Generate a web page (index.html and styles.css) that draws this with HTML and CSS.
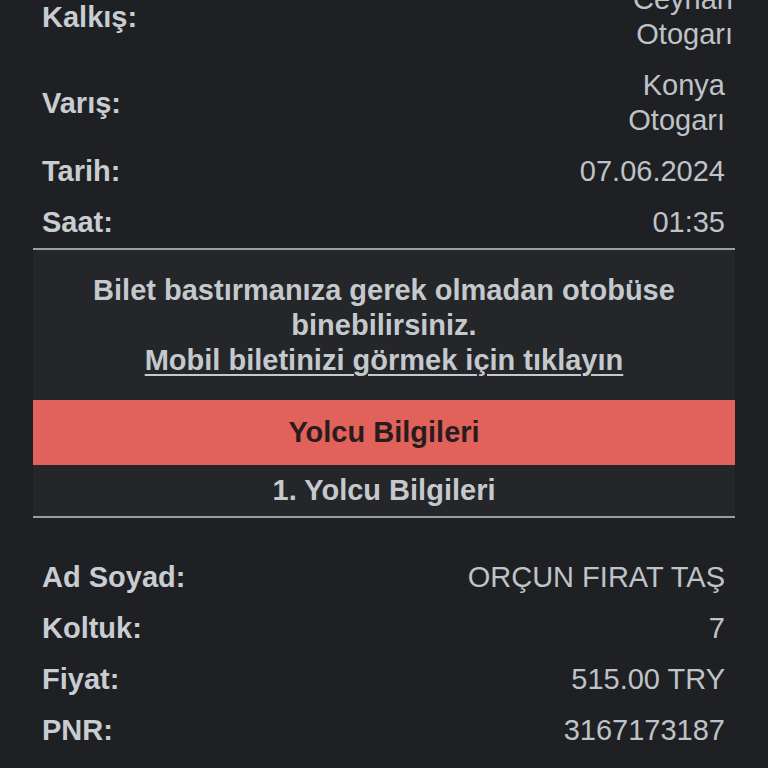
FILE: index.html
```html
<!DOCTYPE html>
<html lang="tr">
<head>
    <meta charset="UTF-8">
    <meta name="viewport" content="width=device-width, initial-scale=1.0">
    <title>Bilet Detayı</title>
    <link rel="stylesheet" href="styles.css">
</head>
<body>
    <div class="ticket">
        <div class="rows">
            <div class="row">
                <span class="label">Kalkış:</span>
                <span class="value shift">Ceyhan<br>Otogarı</span>
            </div>
            <div class="row">
                <span class="label">Varış:</span>
                <span class="value">Konya<br>Otogarı</span>
            </div>
            <div class="row">
                <span class="label">Tarih:</span>
                <span class="value">07.06.2024</span>
            </div>
            <div class="row">
                <span class="label">Saat:</span>
                <span class="value">01:35</span>
            </div>
        </div>

        <div class="box">
            <p class="notice">
                Bilet bastırmanıza gerek olmadan otobüse<br>binebilirsiniz.<br>
                <a href="#">Mobil biletinizi görmek için tıklayın</a>
            </p>
            <div class="band">Yolcu Bilgileri</div>
            <div class="sub">1. Yolcu Bilgileri</div>
        </div>

        <div class="rows passenger">
            <div class="row">
                <span class="label">Ad Soyad:</span>
                <span class="value">ORÇUN FIRAT TAŞ</span>
            </div>
            <div class="row">
                <span class="label">Koltuk:</span>
                <span class="value">7</span>
            </div>
            <div class="row">
                <span class="label">Fiyat:</span>
                <span class="value">515.00 TRY</span>
            </div>
            <div class="row">
                <span class="label">PNR:</span>
                <span class="value">3167173187</span>
            </div>
        </div>
    </div>
</body>
</html>
```

FILE: styles.css
```css
body {
    margin: 0;
    background: #1f2023;
    font-family: "Liberation Sans", Arial, sans-serif;
    font-size: 29px;
    color: #c4c9ce;
    overflow: hidden;
}

.ticket {
    margin: -26px 33px 0 33px;
}

.row {
    display: flex;
    justify-content: space-between;
    align-items: center;
    padding: 8px 10px 8px 9px;
    line-height: 35px;
}

.label {
    font-weight: bold;
    color: #c8cdd2;
}

.value {
    text-align: right;
    color: #bec3c8;
}

.shift {
    margin-right: -8px;
}

.box {
    background: #252629;
    border-top: 2px solid #9a9da1;
    border-bottom: 2px solid #9a9da1;
}

.notice {
    margin: 0;
    padding: 23px 20px 22px;
    text-align: center;
    font-weight: bold;
    line-height: 35px;
}

.notice a {
    color: #c4c9ce;
    text-decoration: underline;
    text-decoration-thickness: 2px;
    text-underline-offset: 4px;
}

.band {
    background: #e0625b;
    color: #2a1c1c;
    font-weight: bold;
    text-align: center;
    height: 65px;
    line-height: 65px;
}

.sub {
    text-align: center;
    font-weight: bold;
    height: 51px;
    line-height: 51px;
}

.passenger {
    margin-top: 34px;
}
```
